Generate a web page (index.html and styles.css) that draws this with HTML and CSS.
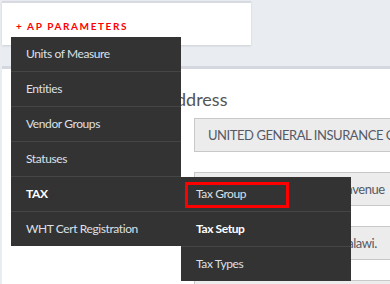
FILE: index.html
```html
<!DOCTYPE html>
<html lang="en">
<head>
<meta charset="utf-8">
<title>AP Parameters</title>
<link rel="stylesheet" href="styles.css">
</head>
<body>
<div class="page">
  <div class="card">
    <a class="card-title" href="#">+ AP PARAMETERS</a>
    <ul class="menu">
      <li class="menu-item">Units of Measure</li>
      <li class="menu-item">Entities</li>
      <li class="menu-item">Vendor Groups</li>
      <li class="menu-item">Statuses</li>
      <li class="menu-item active has-sub">TAX
        <ul class="menu submenu">
          <li class="menu-item highlighted">Tax Group<span class="mark"></span></li>
          <li class="menu-item active">Tax Setup</li>
          <li class="menu-item">Tax Types</li>
        </ul>
      </li>
      <li class="menu-item">WHT Cert Registration</li>
    </ul>
  </div>
  <div class="panel">
    <h2 class="panel-heading">Address</h2>
    <div class="fields">
      <div class="field">UNITED GENERAL INSURANCE COMPANY LIMITED</div>
      <div class="field">Plot 14/8, Queen Victoria avenue</div>
      <div class="field">P.O Box 3038, Blantyre, Malawi.</div>
      <div class="field">&nbsp;</div>
    </div>
  </div>
</div>
</body>
</html>
```

FILE: styles.css
```css
html, body {
  margin: 0;
  padding: 0;
  overflow: hidden;
  background: #e9ecf1;
  font-family: Lato, "Open Sans", sans-serif;
}

.page {
  width: 390px;
  height: 284px;
  display: flex;
  flex-direction: column;
  overflow: hidden;
}

.card {
  position: relative;
  margin: 1px 0 0 2px;
  width: 249px;
  height: 44px;
  box-sizing: border-box;
  border-top: 2px solid #d7dae1;
  background: #fff;
  box-shadow: 0 1px 2px rgba(0, 0, 0, 0.12);
  padding: 16px 0 0 14px;
  flex: none;
  z-index: 5;
}

.card-title {
  display: block;
  color: #ff0000;
  font-size: 10px;
  font-weight: 700;
  letter-spacing: 1.6px;
  line-height: 14px;
  text-decoration: none;
}

.menu {
  position: absolute;
  left: 9px;
  top: 34px;
  width: 170px;
  margin: 0;
  padding: 0;
  list-style: none;
  background: #333333;
  z-index: 10;
}

.menu-item {
  position: relative;
  height: 34px;
  line-height: 34px;
  padding-left: 15px;
  border-bottom: 1px solid #454545;
  color: #dde0e6;
  font-size: 12px;
  letter-spacing: -0.4px;
}

.menu-item:last-child {
  border-bottom: none;
}

.menu-item.active {
  color: #ffffff;
  font-weight: 700;
}

.submenu {
  left: 100%;
  top: 0;
}

.submenu .menu-item {
  font-weight: 400;
  color: #dde0e6;
}

.submenu .menu-item.active {
  color: #ffffff;
  font-weight: 700;
}

.mark {
  position: absolute;
  left: 4px;
  top: 5px;
  width: 98px;
  height: 20px;
  border: 3px solid #ff0000;
}

.panel {
  flex: 1;
  margin: 21px 0 0 2px;
  border-top: 3px solid #d4d7df;
  background: #fff;
  padding: 18px 0 0 0;
  overflow: hidden;
}

.panel-heading {
  margin: 0 0 7px 162px;
  font-size: 18px;
  line-height: 24px;
  font-weight: 400;
  color: #555;
}

.fields {
  display: flex;
  flex-direction: column;
  gap: 20px;
  padding-left: 192px;
}

.field {
  flex: none;
  width: 320px;
  height: 34px;
  box-sizing: border-box;
  border: 1px solid #c8c8c8;
  background: #ececec;
  padding-left: 13px;
  line-height: 32px;
  font-size: 13px;
  letter-spacing: -0.45px;
  color: #555a66;
  white-space: nowrap;
  overflow: hidden;
}
```
